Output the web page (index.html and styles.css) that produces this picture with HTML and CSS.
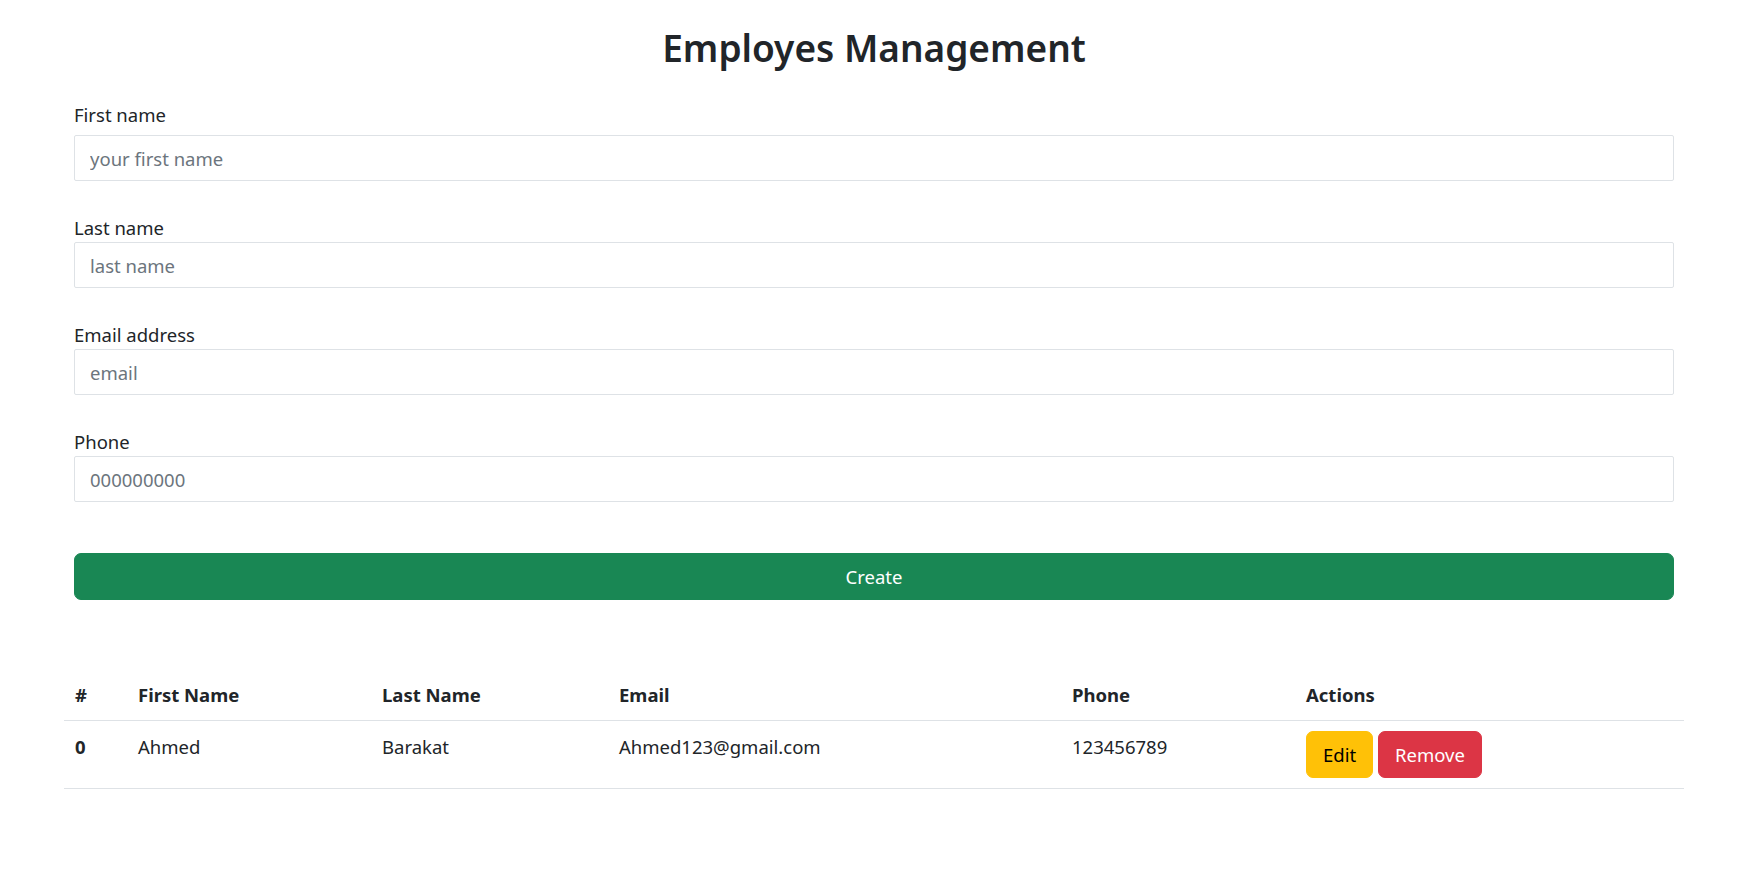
FILE: index.html
```html
<!DOCTYPE html>
<html lang="en">
<head>
<meta charset="utf-8">
<title>Employes Management</title>
<link rel="stylesheet" href="styles.css">
</head>
<body>
<div class="page">
  <h1 class="title">Employes Management</h1>
  <form class="form">
    <div class="field">
      <label class="label label-first" for="fn">First name</label>
      <input class="input" id="fn" type="text" placeholder="your first name">
    </div>
    <div class="field">
      <label class="label" for="ln">Last name</label>
      <input class="input" id="ln" type="text" placeholder="last name">
    </div>
    <div class="field">
      <label class="label" for="em">Email address</label>
      <input class="input" id="em" type="email" placeholder="email">
    </div>
    <div class="field">
      <label class="label" for="ph">Phone</label>
      <input class="input" id="ph" type="text" placeholder="000000000">
    </div>
    <button type="button" class="btn btn-create">Create</button>
  </form>
  <table class="table">
    <thead>
      <tr>
        <th class="col-num">#</th>
        <th class="col-first">First Name</th>
        <th class="col-last">Last Name</th>
        <th class="col-email">Email</th>
        <th class="col-phone">Phone</th>
        <th class="col-actions">Actions</th>
      </tr>
    </thead>
    <tbody>
      <tr>
        <th class="row-num">0</th>
        <td>Ahmed</td>
        <td>Barakat</td>
        <td>Ahmed123@gmail.com</td>
        <td>123456789</td>
        <td class="cell-actions"><button type="button" class="btn btn-edit">Edit</button> <button type="button" class="btn btn-remove">Remove</button></td>
      </tr>
    </tbody>
  </table>
</div>
</body>
</html>
```

FILE: styles.css
```css
* { box-sizing: border-box; }
html, body { margin: 0; padding: 0; background: #fff; }
body {
  font-family: "Noto Sans", "Open Sans", Arial, sans-serif;
  font-size: 18.5px;
  line-height: 27px;
  color: #212529;
}
.page {
  padding: 26px 81px 40px 74px;
}
.title {
  margin: 0 0 32px;
  text-align: center;
  font-size: 37px;
  line-height: 43px;
  font-weight: 600;
  color: #212529;
}
.form {
  display: flex;
  flex-direction: column;
}
.field {
  display: flex;
  flex-direction: column;
  margin-bottom: 33px;
}
.label {
  display: block;
  margin-bottom: 1px;
  font-size: 18.5px;
  line-height: 27px;
}
.label-first { margin-bottom: 7px; }
.input {
  display: block;
  width: 100%;
  height: 46px;
  padding: 0 15px;
  border: 1px solid #dee2e6;
  border-radius: 2px;
  font-family: inherit;
  font-size: 18.5px;
  color: #212529;
  background: #fff;
  outline: none;
}
.input::placeholder { color: #6c757d; opacity: 1; }
.btn {
  font-family: inherit;
  font-size: 18.5px;
  line-height: 27px;
  padding: 9px 16px;
  border: 1px solid transparent;
  border-radius: 7px;
  cursor: pointer;
}
.btn-create {
  margin-top: 18px;
  width: 100%;
  background: #198754;
  border-color: #198754;
  color: #fff;
}
.table {
  margin: 73px -10px 0;
  width: calc(100% + 20px);
  border-collapse: collapse;
  table-layout: fixed;
}
.table th, .table td {
  text-align: left;
  vertical-align: top;
  padding: 12px 11px 10px;
  border-bottom: 1px solid #dee2e6;
  font-size: 18.5px;
  line-height: 27px;
}
.table thead th {
  font-weight: 700;
  padding-top: 8px;
  padding-bottom: 12px;
}
.table .cell-actions { padding-top: 10px; }
.table .row-num { font-weight: 700; }
.col-num { width: 63px; }
.col-first { width: 244px; }
.col-last { width: 237px; }
.col-email { width: 453px; }
.col-phone { width: 234px; }
.col-actions { width: auto; }
.btn-edit {
  background: #ffc107;
  border-color: #ffc107;
  color: #000;
}
.btn-remove {
  background: #dc3545;
  border-color: #dc3545;
  color: #fff;
}
```
